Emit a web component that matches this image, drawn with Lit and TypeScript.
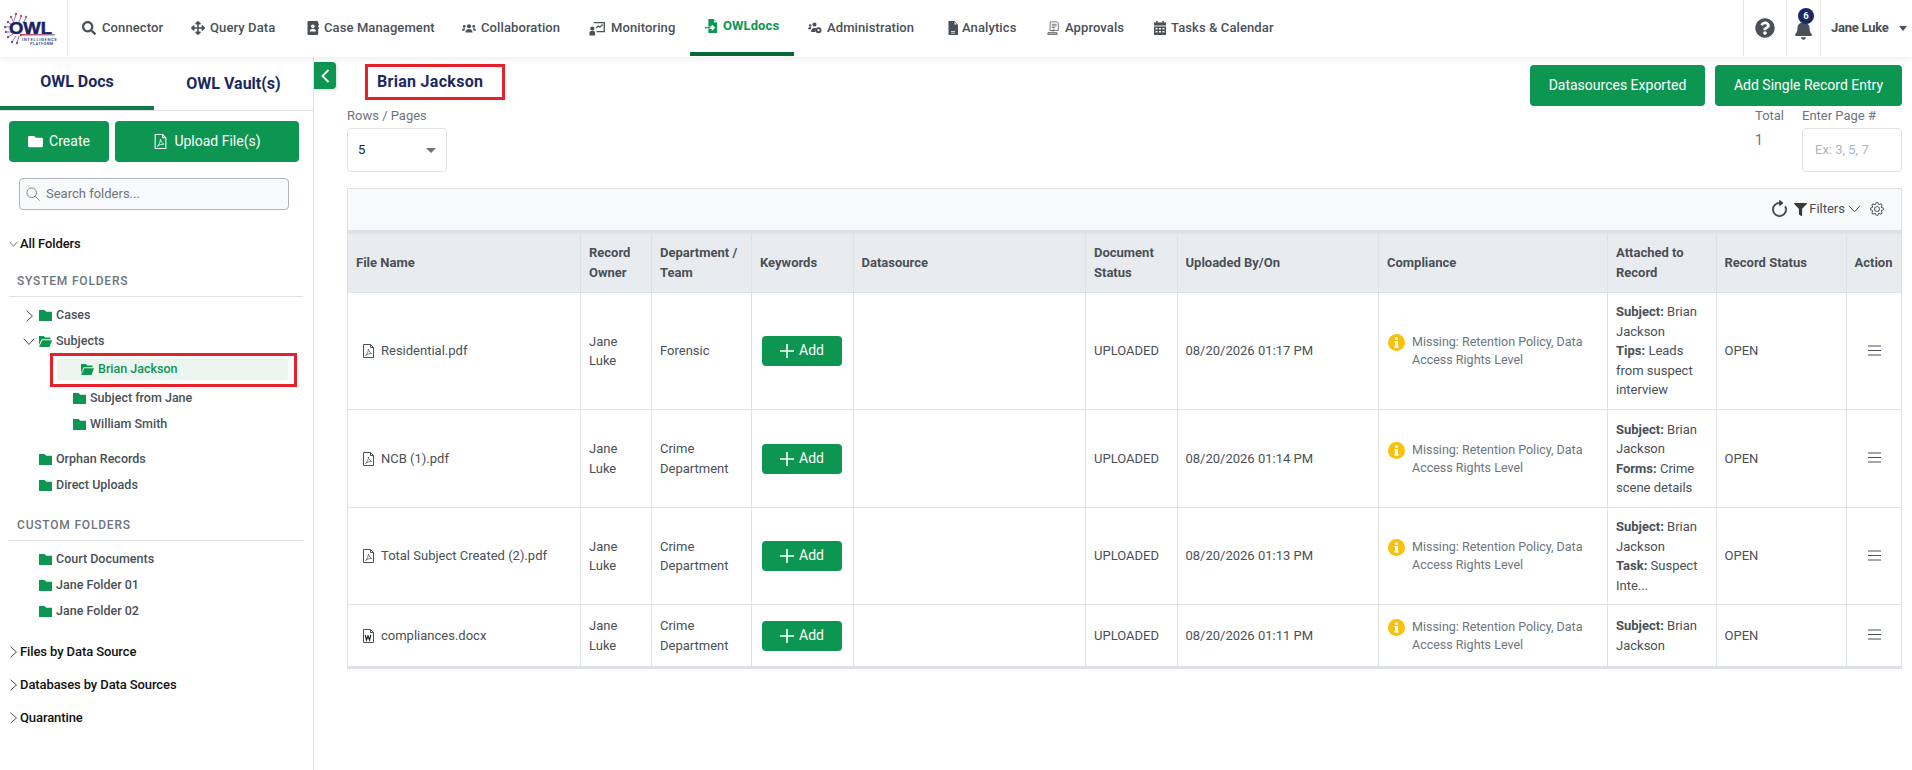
import { LitElement, html, css } from "lit";
import { customElement } from "lit/decorators.js";

const fa = (vb: string, d: string, cls = "") => html`<svg class="ic ${cls}" viewBox="${vb}" fill="currentColor"><path d="${d}"></path></svg>`;
const SEARCH = "M505 442.7L405.3 343c-4.5-4.5-10.6-7-17-7H372c27.6-35.3 44-79.7 44-128C416 93.1 322.9 0 208 0S0 93.1 0 208s93.1 208 208 208c48.3 0 92.7-16.4 128-44v16.3c0 6.4 2.5 12.5 7 17l99.7 99.7c9.4 9.4 24.6 9.4 33.9 0l28.3-28.3c9.4-9.4 9.4-24.6.1-34zM208 336c-70.7 0-128-57.2-128-128 0-70.7 57.2-128 128-128 70.7 0 128 57.2 128 128 0 70.7-57.2 128-128 128z";
const MOVE = "M352.201 425.775l-79.196 79.196c-9.373 9.373-24.568 9.373-33.941 0l-79.196-79.196c-15.119-15.119-4.411-40.971 16.971-40.97h51.162L228 284H127.196v51.162c0 21.382-25.851 32.09-40.971 16.971L7.029 272.937c-9.373-9.373-9.373-24.569 0-33.941L86.225 159.8c15.119-15.119 40.971-4.411 40.971 16.971V228H228V127.196h-51.23c-21.382 0-32.09-25.851-16.971-40.971l79.196-79.196c9.373-9.373 24.568-9.373 33.941 0l79.196 79.196c15.119 15.119 4.411 40.971-16.971 40.971h-51.162V228h100.804v-51.162c0-21.382 25.851-32.09 40.97-16.971l79.196 79.196c9.373 9.373 9.373 24.569 0 33.941L425.773 352.2c-15.119 15.119-40.971 4.411-40.97-16.971V284H284v100.804h51.23c21.382 0 32.09 25.851 16.971 40.971z";
const HELP = "M504 256c0 136.997-111.043 248-248 248S8 392.997 8 256C8 119.083 119.043 8 256 8s248 111.083 248 248zM262.655 90c-54.497 0-89.255 22.957-116.549 63.758-3.536 5.286-2.353 12.415 2.715 16.258l34.699 26.31c5.205 3.947 12.621 3.008 16.665-2.122 17.864-22.658 30.113-35.797 57.303-35.797 20.429 0 45.698 13.148 45.698 32.958 0 14.976-12.363 22.667-32.534 33.976C247.128 238.528 216 254.941 216 296v4c0 6.627 5.373 12 12 12h56c6.627 0 12-5.373 12-12v-1.333c0-28.462 83.186-29.647 83.186-106.667 0-58.002-60.165-102-116.531-102zM256 338c-25.365 0-46 20.635-46 46 0 25.364 20.635 46 46 46s46-20.636 46-46c0-25.365-20.635-46-46-46z";
const BELL = "M224 512c35.32 0 63.97-28.65 63.97-64H160.03c0 35.35 28.65 64 63.97 64zm215.39-149.71c-19.32-20.76-55.47-51.99-55.47-154.29 0-77.7-54.48-139.9-127.94-155.16V32c0-17.67-14.32-32-31.98-32s-31.98 14.33-31.98 32v20.84C118.56 68.1 64.08 130.3 64.08 208c0 102.3-36.15 133.53-55.47 154.29-6 6.45-8.66 14.16-8.61 21.71.11 16.4 12.98 32 32.1 32h383.8c19.12 0 32-15.6 32.1-32 .05-7.55-2.61-15.27-8.61-21.71z";
const FUNNEL = "M487.976 0H24.028C2.71 0-8.047 25.866 7.058 40.971L192 225.941V432c0 7.831 3.821 15.341 10.237 19.852l80 55.98C298.02 518.87 320 507.68 320 487.98V225.941l184.947-184.97C520.021 25.896 509.338 0 487.976 0z";
const GEAR = "M8 4.754a3.246 3.246 0 1 0 0 6.492 3.246 3.246 0 0 0 0-6.492zM5.754 8a2.246 2.246 0 1 1 4.492 0 2.246 2.246 0 0 1-4.492 0zM9.796 1.343c-.527-1.79-3.065-1.79-3.592 0l-.094.319a.873.873 0 0 1-1.255.52l-.292-.16c-1.64-.892-3.433.902-2.54 2.541l.159.292a.873.873 0 0 1-.52 1.255l-.319.094c-1.79.527-1.79 3.065 0 3.592l.319.094a.873.873 0 0 1 .52 1.255l-.16.292c-.892 1.64.901 3.434 2.541 2.54l.292-.159a.873.873 0 0 1 1.255.52l.094.319c.527 1.79 3.065 1.79 3.592 0l.094-.319a.873.873 0 0 1 1.255-.52l.292.16c1.64.893 3.434-.902 2.54-2.541l-.159-.292a.873.873 0 0 1 .52-1.255l.319-.094c1.79-.527 1.79-3.065 0-3.592l-.319-.094a.873.873 0 0 1-.52-1.255l.16-.292c.893-1.64-.902-3.433-2.541-2.54l-.292.159a.873.873 0 0 1-1.255-.52l-.094-.319zm-2.633.283c.246-.835 1.428-.835 1.674 0l.094.319a1.873 1.873 0 0 0 2.693 1.115l.291-.16c.764-.415 1.6.42 1.184 1.185l-.159.292a1.873 1.873 0 0 0 1.116 2.692l.318.094c.835.246.835 1.428 0 1.674l-.319.094a1.873 1.873 0 0 0-1.115 2.693l.16.291c.415.764-.42 1.6-1.185 1.184l-.291-.159a1.873 1.873 0 0 0-2.693 1.116l-.094.318c-.246.835-1.428.835-1.674 0l-.094-.319a1.873 1.873 0 0 0-2.692-1.115l-.292.16c-.764.415-1.6-.42-1.184-1.185l.159-.291A1.873 1.873 0 0 0 1.945 8.93l-.319-.094c-.835-.246-.835-1.428 0-1.674l.319-.094A1.873 1.873 0 0 0 3.06 4.377l-.16-.292c-.415-.764.42-1.6 1.185-1.184l.292.159a1.873 1.873 0 0 0 2.692-1.115l.094-.319z";

const icons: Record<string, any> = {
  search: fa("0 0 512 512", SEARCH),
  move: fa("0 0 512 512", MOVE),
  book: html`<svg class="ic" viewBox="0 0 12 14" fill="currentColor"><path d="M1.5 0H10a1.2 1.2 0 0 1 1.2 1.2v11.6A1.2 1.2 0 0 1 10 14H1.5a1 1 0 0 1-1-1V1a1 1 0 0 1 1-1z"></path><circle cx="5.8" cy="5.2" r="1.8" fill="#fff"></circle><path d="M2.7 10.4c0-1.8 1.4-2.7 3.1-2.7s3.1.9 3.1 2.7z" fill="#fff"></path><rect x="11.2" y="2.5" width=".8" height="2"></rect><rect x="11.2" y="6" width=".8" height="2"></rect></svg>`,
  users: html`<svg class="ic" viewBox="0 0 16 12" fill="currentColor"><circle cx="8" cy="4" r="2.4"></circle><path d="M4 11c0-2.6 1.6-4 4-4s4 1.4 4 4z"></path><circle cx="2.6" cy="4.2" r="1.6"></circle><circle cx="13.4" cy="4.2" r="1.6"></circle><path d="M0 9c0-1.6.9-2.8 2.4-2.8.5 0 1 .2 1.3.4C3 7.3 2.7 8 2.7 9zM16 9c0-1.6-.9-2.8-2.4-2.8-.5 0-1 .2-1.3.4.7.7 1 1.4 1 2.4z"></path></svg>`,
  monitor: html`<svg class="ic big" viewBox="0 0 17 15" fill="none" stroke="currentColor"><path d="M5 1.2h11.2v9.6H8" stroke-width="1.4"></path><path d="M7.5 7l2.4-2.2 1.6 1.4 3-3" stroke-width="1.3"></path><circle cx="3.5" cy="7.5" r="2.2" fill="currentColor" stroke="none"></circle><path d="M.4 15v-2.5c0-1.7 1.4-2.6 3.1-2.6s3 .9 3 2.6V15z" fill="currentColor" stroke="none"></path></svg>`,
  owldocs: html`<svg class="ic" viewBox="0 0 14 16" fill="currentColor"><path fill-rule="evenodd" d="M4 0h6l4 4v12H4v-4.6h3.8v2.2L12 10 7.8 6.4v2.3H4zm6.6 1v3h3z"></path><rect x="0" y="9" width="2.2" height="1.8"></rect><rect x="2.8" y="9" width="3.5" height="1.8"></rect></svg>`,
  admin: html`<svg class="ic" viewBox="0 0 16 13" fill="currentColor"><circle cx="2.5" cy="3.6" r="1.5"></circle><circle cx="7.4" cy="2.6" r="2.3"></circle><path d="M0 8c0-1.500.9-2.600 2.400-2.600.6 0 1 .2 1.300.4L3 8zM3.500 11c0-2.800 1.400-4.500 3.800-4.500.7 0 1.300.1 1.800.4L8.500 11z"></path><circle cx="12" cy="9" r="3.400"></circle><circle cx="12" cy="9" r="1.300" fill="#fff"></circle></svg>`,
  analytics: html`<svg class="ic" viewBox="0 0 10 14" fill="currentColor"><path fill-rule="evenodd" d="M.5 0h5.800L10 3.700V14H.5zM6.500 1v2.500H9zM3 11h4v-.8H3zM3 12.500h4v-.7H3z"></path></svg>`,
  approvals: html`<svg class="ic" viewBox="0 0 16 17" fill="none" stroke="currentColor" stroke-width=".9"><path d="M4.500 1h8.500l1.500 1.500v9h-10z"></path><path d="M6.500 4h6M6.500 6h6M6.500 8h4"></path><path d="M1 16h13M2 14h10.500v2H2z"></path><path d="M9 9.500v2.500h-2.500"></path></svg>`,
  calendar: html`<svg class="ic" viewBox="0 0 12 14" fill="currentColor"><path fill-rule="evenodd" d="M2.200 0h1.600v1.500h4.400V0h1.600v1.500H12v3H0v-3h2.200zM0 5.500h12V14H0zM1.500 7v1.500h2V7zm3.500 0v1.500h2V7zm3.500 0v1.500h2V7zM1.500 10v1.500h2V10zm3.500 0v1.500h2V10zm3.500 0v1.500h2V10z"></path></svg>`,
};

const NAV = [
  { k: "search", t: "Connector", s: 20 }, { k: "move", t: "Query Data", s: 19 }, { k: "book", t: "Case Management", s: 18 },
  { k: "users", t: "Collaboration", s: 19 }, { k: "monitor", t: "Monitoring", s: 21 }, { k: "owldocs", t: "OWLdocs", s: 19, on: true },
  { k: "admin", t: "Administration", s: 19 }, { k: "analytics", t: "Analytics", s: 16 }, { k: "approvals", t: "Approvals", s: 19 }, { k: "calendar", t: "Tasks & Calendar", s: 18 },
];

const folder = html`<svg class="fold" viewBox="0 0 13 11"><path d="M0 0h5.500l1.800 1.800H13V11H0z"></path></svg>`;
const folderOpen = html`<svg class="fold" viewBox="0 0 13 11"><path d="M0 0h4.800l1.500 1.500h5.200v1.800H2.600L0 9z"></path><path d="M3.200 4.300H13L10.500 11H0z"></path></svg>`;
const chevR = html`<svg class="chev" viewBox="0 0 9 12"><path d="M1.500.8l6 5.200-6 5.200"></path></svg>`;
const chevD = html`<svg class="chev" viewBox="0 0 12 9"><path d="M.8 1.500l5.200 6 5.200-6"></path></svg>`;
const pdf = html`<svg class="fileic" viewBox="0 0 11 14" fill="none" stroke="#495057"><path d="M.5.500h7l3 3v10H.5z"></path><path d="M7.500.5v3h3"></path><path d="M2.500 11.500c1.500-1 3-4 2.800-6.500 1 2.500 2 3.800 3.300 4.500-2 0-4.500.5-6.100 2z" stroke-width=".7"></path></svg>`;
const doc = html`<svg class="fileic" viewBox="0 0 11 14" fill="none" stroke="#495057"><path d="M.5.500h7l3 3v10H.5z"></path><path d="M7.500.5v3h3"></path><path d="M2.200 6l1.300 5 1.500-4 1.500 4 1.300-5" stroke-width="1.200" stroke="#212529"></path></svg>`;

const COLS = [233, 71, 100, 101.5, 232.5, 91.5, 201.5, 229, 108.5, 130, 55.5];
const HEAD = [["File Name"], ["Record", "Owner"], ["Department /", "Team"], ["Keywords"], ["Datasource"], ["Document", "Status"], ["Uploaded By/On"], ["Compliance"], ["Attached to", "Record"], ["Record Status"], ["Action"]];
const ROWS = [
  { h: 117, ic: pdf, f: "Residential.pdf", d: ["Forensic"], t: "08/20/2026 01:17 PM", a: [["Subject:", "Brian"], ["", "Jackson"], ["Tips:", "Leads"], ["", "from suspect"], ["", "interview"]] },
  { h: 98, ic: pdf, f: "NCB (1).pdf", d: ["Crime", "Department"], t: "08/20/2026 01:14 PM", a: [["Subject:", "Brian"], ["", "Jackson"], ["Forms:", "Crime"], ["", "scene details"]] },
  { h: 97, ic: pdf, f: "Total Subject Created (2).pdf", d: ["Crime", "Department"], t: "08/20/2026 01:13 PM", a: [["Subject:", "Brian"], ["", "Jackson"], ["Task:", "Suspect"], ["", "Inte..."]] },
  { h: 63, ic: doc, f: "compliances.docx", d: ["Crime", "Department"], t: "08/20/2026 01:11 PM", a: [["Subject:", "Brian"], ["", "Jackson"]] },
];

@customElement("app-root")
export class AppRoot extends LitElement {
  static styles = css`
    :host { display: block; width: 1912px; height: 770px; overflow: hidden; background: #fff; font-family: Roboto, "Noto Sans", sans-serif; font-size: 13px; line-height: 19.5px; color: #495057; }
    * { box-sizing: border-box; }
    .ic { display: block; width: 14px; height: 14px; }
    .ic.big { width: 16px; height: 15px; margin-left: -1px; }
    header { height: 57px; display: flex; background: #fff; box-shadow: 0 2px 7px rgba(0,0,0,.07); position: relative; z-index: 2; }
    .logo { width: 68px; flex: none; border-right: 1px solid #e3e5e8; height: 56px; }
    .logo svg { display: block; width: 67px; height: 56px; }
    .nav { display: grid; grid-template-columns: 109px 115px 156px 128px 114px 104px 138px 100px 107px 148px; height: 56px; }
    .item { display: flex; align-items: center; padding-left: 14px; font-weight: 500; color: #495057; white-space: nowrap; letter-spacing: .1px; }
    .item .slot { flex: none; }
    .item.on { color: #0d9652; border-bottom: 4px solid #056839; padding-bottom: 1px; font-weight: 700; }
    .hright { margin-left: auto; display: flex; height: 56px; }
    .hcell { border-left: 1px solid #e3e5e8; display: flex; align-items: center; justify-content: center; color: #495057; position: relative; }
    .help { width: 43px; } .help .ic { width: 20px; height: 20px; }
    .bell { width: 34px; } .bell .ic { width: 17px; height: 20px; margin-top: 4px; }
    .badge { position: absolute; left: 11px; top: 8px; width: 16px; height: 16px; border-radius: 50%; background: #1a2a63; color: #fff; font-size: 9.500px; line-height: 16px; text-align: center; font-weight: 700; }
    .user { width: 92px; justify-content: flex-start; padding-left: 10px; font-weight: 700; gap: 10px; letter-spacing: -.25px; }
    .caret { width: 0; height: 0; border-left: 4.500px solid transparent; border-right: 4.500px solid transparent; border-top: 5px solid #495057; }
    .body { display: flex; height: 713px; position: relative; }
    aside { width: 314px; flex: none; border-right: 1px solid #dee2e6; }
    .tabs { display: grid; grid-template-columns: 154px 1fr; height: 54px; border-bottom: 1px solid #dee2e6; color: #1a2a5e; font-weight: 700; font-size: 16px; text-align: center; }
    .tabs div { padding-top: 15px; }
    .tabs .act { border-bottom: 4px solid #0d7a48; box-shadow: 0 1px 0 #dee2e6; height: 53px; }
    .tabs .oth { padding-top: 17px; }
    .sbtns { display: grid; grid-template-columns: 100px 184px; gap: 6px; padding: 10px 0 0 9px; }
    .btn { background: #0d9652; color: #fff; border: 0; border-radius: 4px; font: inherit; font-size: 14px; display: flex; align-items: center; justify-content: center; gap: 6px; }
    .sbtns .btn { height: 41px; }
    .sbtns svg { width: 15px; height: 15px; flex: none; }
    .search { margin: 16px 0 0 19px; width: 270px; height: 32px; border: 1px solid #adb5bd; border-radius: 4px; background: #f8f9fa; display: flex; align-items: center; gap: 6px; padding-left: 6px; color: #6c757d; font-size: 13px; }
    .search svg { width: 14px; height: 14px; flex: none; color: #6c757d; }
    .sec { display: flex; align-items: center; height: 33px; color: #111; font-weight: 500; padding-left: 9px; gap: 2px; letter-spacing: -.1px; }
    .sec .chev { width: 9px; height: 12px; }
    .allf { margin-top: 17px; }
    .chev { fill: none; stroke: #495057; stroke-width: 1; display: block; flex: none; }
    .cap { margin: 16px 10px 0 9px; padding: 0 0 7px 8px; border-bottom: 1px solid #dee2e6; color: #6c757d; font-weight: 500; font-size: 12px; letter-spacing: .8px; line-height: 16px; height: 24px; }
    .cap.first { margin-top: 13px; }
    .cap.second { margin-top: 19px; }
    .tree { padding-top: 5px; }
    .row { display: flex; align-items: center; height: 26px; color: #495057; font-weight: 500; font-size: 12.500px; padding-left: 39px; gap: 4px; position: relative; }
    .fold { width: 13px; height: 11px; fill: #0d9652; flex: none; display: block; }
    .row .chev { position: absolute; left: 25px; top: 8px; width: 9px; height: 12px; }
    .row .chev.d { left: 23px; top: 9px; width: 12px; height: 9px; }
    .lvl2 { padding-left: 73px; }
    .sp { margin-top: 9px; }
    .mark { margin: -1px 0 -2px 50px; width: 247px; height: 34px; border: 3px solid #e8202a; padding: 2px 6px 0 4px; font-size: 12.500px; }
    .mark .in { height: 22px; background: #ecf5f0; border-radius: 3px; display: flex; align-items: center; gap: 4px; padding-left: 24px; color: #0d9652; font-weight: 500; }
    .secs { margin-top: 11px; }
    main { flex: 1; padding: 8px 10px 0 33px; min-width: 0; }
    .collapse { position: absolute; left: 314px; top: 5px; width: 22px; height: 27px; background: #0d9652; border-radius: 0 4px 4px 0; display: flex; align-items: center; justify-content: center; box-shadow: 1px 1px 3px rgba(0,0,0,.15); }
    .collapse svg { width: 9px; height: 14px; fill: none; stroke: #fff; stroke-width: 1.800; }
    .top { display: flex; justify-content: space-between; height: 41px; }
    .title { margin: -1px 0 0 18px; width: 140px; height: 36px; border: 3px solid #e8202a; color: #1a2a5e; font-weight: 700; font-size: 16px; padding-left: 9px; line-height: 29px; letter-spacing: .3px; }
    .acts { display: flex; gap: 10px; }
    .acts .btn { height: 41px; }
    .b1 { width: 175px; } .b2 { width: 187px; }
    .filters { display: flex; height: 82px; }
    .lbl { color: #6c757d; line-height: 19px; height: 22px; }
    .sel { width: 100px; height: 44px; border: 1px solid #dee2e6; border-radius: 4px; display: flex; align-items: center; justify-content: space-between; padding: 0 10px; color: #212529; }
    .sel i { display: block; width: 0; height: 0; border-left: 5px solid transparent; border-right: 5px solid transparent; border-top: 5px solid #6c757d; }
    .rgt { margin-left: auto; display: flex; gap: 14px; }
    .total { width: 33px; } .total .v { color: #6c757d; font-size: 14px; line-height: 22px; margin-top: 1px; }
    .page { width: 100px; }
    .inp { height: 44px; border: 1px solid #dee2e6; border-radius: 4px; color: #adb5bd; display: flex; align-items: center; padding-left: 12px; }
    .card { width: 1555px; }
    .tool { height: 45px; background: #f8f9fa; border: 1px solid #dee2e6; border-bottom: 3px solid #dee2e6; display: flex; align-items: center; justify-content: flex-end; padding: 0 17px 1px 0; color: #495057; }
    .tool .rf { width: 19px; height: 19px; margin-right: 5px; color: #343a40; }
    .tool .rf path { stroke: currentColor; stroke-width: .5; }
    .tool .fn { width: 13px; height: 13px; color: #343a40; margin-right: 2px; }
    .tool .fch { width: 13px; height: 8px; margin: 0 9px 0 3px; }
    .tool .gr { width: 14px; height: 14px; color: #495057; }
    table { border-collapse: collapse; table-layout: fixed; width: 1555px; border-left: 1px solid #dee2e6; border-right: 1px solid #dee2e6; border-bottom: 3px solid #dee2e6; }
    th { background: #e9ecef; text-align: left; font-weight: 700; height: 59px; padding: 0 8px; border: 1px solid #dee2e6; color: #495057; line-height: 20px; }
    td { padding: 0 8px; border: 1px solid #dee2e6; color: #495057; vertical-align: middle; }
    .fn-cell { display: flex; align-items: center; gap: 7px; padding-left: 7px; white-space: nowrap; }
    .fileic { width: 11px; height: 14px; flex: none; display: block; }
    .add { width: 80px; height: 30px; gap: 5px; font-size: 14px; margin-left: 2px; }
    .add svg { width: 14px; height: 14px; stroke: #fff; stroke-width: 1.600; fill: none; flex: none; }
    .comp { display: flex; align-items: flex-start; gap: 7px; padding-left: 1px; font-size: 12.500px; line-height: 18px; color: #6c757d; }
    .info { width: 17px; height: 17px; flex: none; margin-top: 1px; display: block; }
    .burger { display: block; width: 13px; height: 11px; margin-left: 13px; margin-top: -2px; stroke: #495057; stroke-width: 1; }
    b { font-weight: 700; }
  `;

  render() {
    return html`
      <header>
        <div class="logo">
          <svg viewBox="0 0 67 56">
            <g fill="none" stroke="#7a4d8f" stroke-width=".8">
              <path d="M16 14l-2 7M21 17l-2 5M26 18l-3 5M11 17l3 6M8 22l5 4M5 27h7M6 32h6M8 37l5-3M12 42l4-6M17 43l2-7" />
            </g>
            <g fill="#c94a6a"><circle cx="16" cy="14" r="1.300"/><circle cx="21" cy="16" r="1.200"/><circle cx="26" cy="17" r="1.200"/><circle cx="11" cy="17" r="1.200"/></g>
            <g fill="#6e5a9e"><circle cx="8" cy="22" r="1.200"/><circle cx="5" cy="27" r="1.200"/><circle cx="6" cy="32" r="1.200"/><circle cx="8" cy="37" r="1.200"/><circle cx="12" cy="42" r="1.200"/><circle cx="17" cy="43" r="1.200"/></g>
            <text x="9" y="33.500" font-family="Liberation Sans" font-weight="700" font-size="17" fill="#1a1f66" stroke="#1a1f66" stroke-width=".5" textLength="43" lengthAdjust="spacingAndGlyphs">OWL</text>
            <defs><linearGradient id="lg"><stop offset="0" stop-color="#d8344f"/><stop offset="1" stop-color="#8b8bc7"/></linearGradient></defs>
            <rect x="20" y="34" width="35" height="1.500" fill="url(#lg)"/><circle cx="21" cy="35" r="1.300" fill="#d8344f"/>
            <text x="22" y="40.500" font-family="Roboto" font-weight="500" font-size="4.300" fill="#2b2f70" textLength="35">INTELLIGENCE</text>
            <text x="30" y="45" font-family="Roboto" font-weight="500" font-size="4" fill="#2b2f70" textLength="23">PLATFORM</text>
          </svg>
        </div>
        <nav class="nav">
          ${NAV.map(n => html`<div class="item ${n.on ? "on" : ""}"><span class="slot" style="width:${n.s}px">${icons[n.k]}</span>${n.t}</div>`)}
        </nav>
        <div class="hright">
          <div class="hcell help">${fa("0 0 512 512", HELP)}</div>
          <div class="hcell bell">${fa("0 0 448 512", BELL)}<span class="badge">6</span></div>
          <div class="hcell user">Jane Luke<span class="caret"></span></div>
        </div>
      </header>
      <div class="body">
        <aside>
          <div class="tabs"><div class="act">OWL Docs</div><div class="oth">OWL Vault(s)</div></div>
          <div class="sbtns">
            <button class="btn"><svg viewBox="0 0 512 512" fill="#fff"><path d="M464 128H272l-64-64H48C21.490 64 0 85.490 0 112v288c0 26.510 21.490 48 48 48h416c26.510 0 48-21.490 48-48V176c0-26.510-21.490-48-48-48z"></path></svg>Create</button>
            <button class="btn"><svg viewBox="0 0 11 14" fill="none" stroke="#fff"><path d="M.5.500h7l3 3v10H.5z"></path><path d="M7.500.5v3h3"></path><path d="M2.500 11.500c1.500-1 3-4 2.800-6.500 1 2.500 2 3.800 3.300 4.500-2 0-4.500.5-6.100 2z" stroke-width=".8"></path></svg>Upload File(s)</button>
          </div>
          <div class="search"><svg viewBox="0 0 16 16" fill="none" stroke="currentColor"><circle cx="6.500" cy="6.500" r="5.500"></circle><path d="M10.500 10.500l5 5"></path></svg>Search folders...</div>
          <div class="sec allf">${chevD}All Folders</div>
          <div class="cap first">SYSTEM FOLDERS</div>
          <div class="tree">
            <div class="row">${chevR}${folder}Cases</div>
            <div class="row"><svg class="chev d" viewBox="0 0 12 9"><path d="M.8 1.500l5.200 6 5.200-6"></path></svg>${folderOpen}Subjects</div>
            <div class="mark"><div class="in">${folderOpen}Brian Jackson</div></div>
            <div class="row lvl2">${folder}Subject from Jane</div>
            <div class="row lvl2">${folder}William Smith</div>
            <div class="row sp">${folder}Orphan Records</div>
            <div class="row">${folder}Direct Uploads</div>
          </div>
          <div class="cap second">CUSTOM FOLDERS</div>
          <div class="tree">
            <div class="row">${folder}Court Documents</div>
            <div class="row">${folder}Jane Folder 01</div>
            <div class="row">${folder}Jane Folder 02</div>
          </div>
          <div class="secs">
            <div class="sec">${chevR}Files by Data Source</div>
            <div class="sec">${chevR}Databases by Data Sources</div>
            <div class="sec">${chevR}Quarantine</div>
          </div>
        </aside>
        <div class="collapse"><svg viewBox="0 0 9 14"><path d="M7.500 1L1.500 7l6 6"></path></svg></div>
        <main>
          <div class="top">
            <div class="title">Brian Jackson</div>
            <div class="acts"><button class="btn b1">Datasources Exported</button><button class="btn b2">Add Single Record Entry</button></div>
          </div>
          <div class="filters">
            <div><div class="lbl">Rows / Pages</div><div class="sel">5<i></i></div></div>
            <div class="rgt">
              <div class="total"><div class="lbl">Total</div><div class="v">1</div></div>
              <div class="page"><div class="lbl">Enter Page #</div><div class="inp">Ex: 3, 5, 7</div></div>
            </div>
          </div>
          <div class="card">
            <div class="tool">
              <svg class="ic rf" viewBox="0 0 16 16" fill="currentColor"><path fill-rule="evenodd" d="M8 3a5 5 0 1 0 4.546 2.914.5.5 0 0 1 .908-.417A6 6 0 1 1 8 2v1z"></path><path d="M8 4.466V.534a.25.25 0 0 1 .41-.192l2.360 1.966c.12.100.12.284 0 .384L8.410 4.658A.25.25 0 0 1 8 4.466z"></path></svg>
              ${fa("0 0 512 512", FUNNEL, "fn")}Filters
              <svg class="chev fch" viewBox="0 0 12 8"><path d="M.5.800L6 6.800l5.500-6"></path></svg>
              <svg class="ic gr" viewBox="0 0 16 16" fill="currentColor"><path fill-rule="evenodd" d="${GEAR}"></path></svg>
            </div>
            <table>
              <colgroup>${COLS.map(c => html`<col style="width:${c}px">`)}</colgroup>
              <thead><tr>${HEAD.map(h => html`<th>${h.map((l, i) => html`${i ? html`<br>` : ""}${l}`)}</th>`)}</tr></thead>
              <tbody>
                ${ROWS.map(r => html`<tr style="height:${r.h}px">
                  <td><div class="fn-cell">${r.ic}${r.f}</div></td>
                  <td>Jane<br>Luke</td>
                  <td>${r.d.map((l, i) => html`${i ? html`<br>` : ""}${l}`)}</td>
                  <td><button class="btn add"><svg viewBox="0 0 14 14"><path d="M7 0v14M0 7h14"></path></svg>Add</button></td>
                  <td></td>
                  <td>UPLOADED</td>
                  <td>${r.t}</td>
                  <td><div class="comp"><svg class="info" viewBox="0 0 17 17"><circle cx="8.500" cy="8.500" r="8.500" fill="#fbbf0c"></circle><rect x="7" y="7" width="3" height="6.500" fill="#fff"></rect><rect x="6.200" y="12.300" width="4.600" height="1.300" fill="#fff"></rect><rect x="6.200" y="7" width="3" height="1.200" fill="#fff"></rect><circle cx="8.500" cy="4.500" r="1.600" fill="#fff"></circle></svg><span>Missing: Retention Policy, Data<br>Access Rights Level</span></div></td>
                  <td>${r.a.map(([k, v], i) => html`${i ? html`<br>` : ""}${k ? html`<b>${k}</b> ` : ""}${v}`)}</td>
                  <td>OPEN</td>
                  <td><svg class="burger" viewBox="0 0 13 11"><path d="M0 1h13M0 5.500h13M0 10h13"></path></svg></td>
                </tr>`)}
              </tbody>
            </table>
          </div>
        </main>
      </div>
    `;
  }
}
